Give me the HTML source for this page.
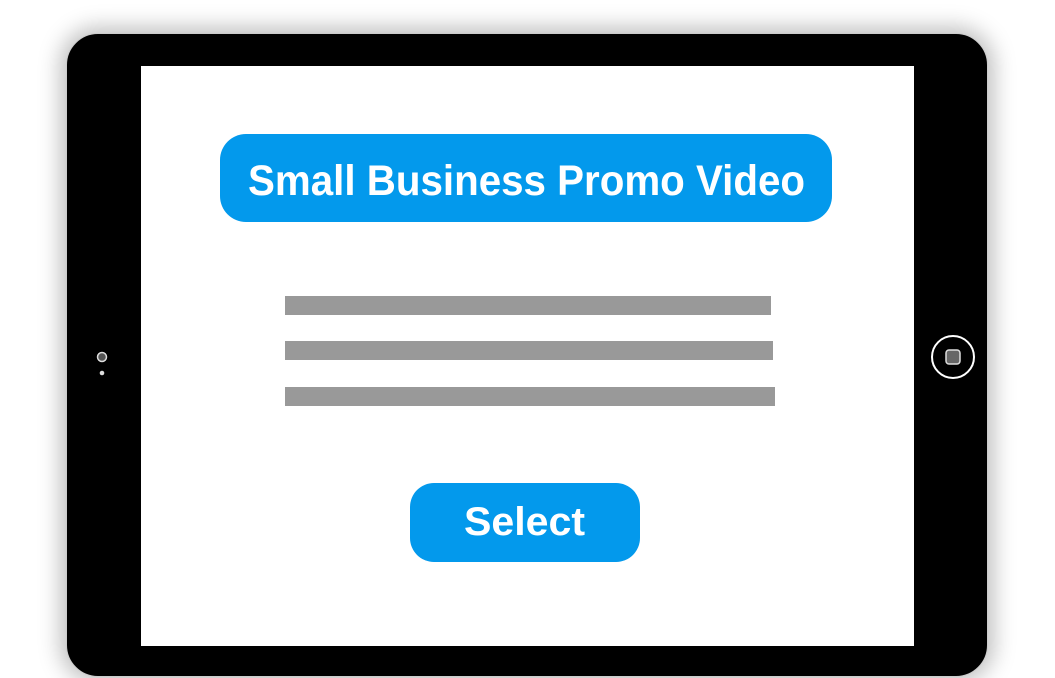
<!DOCTYPE html>
<html><head><style>
html,body{margin:0;padding:0;background:#fff;width:1055px;height:678px;overflow:hidden;position:relative;font-family:"Liberation Sans",sans-serif}
.tab{position:absolute;left:66px;top:33px;width:922px;height:644px;background:#000;border-radius:32px;border:1.5px solid #ccc;box-sizing:border-box;box-shadow:0 0 22px 6px rgba(0,0,0,0.25)}
.scr{position:absolute;left:141px;top:66px;width:773px;height:580px;background:#fff}
.bar{position:absolute;background:#999;height:19px}
</style></head><body>
<div class="tab"></div>
<div class="scr"></div>
<svg width="1055" height="678" style="position:absolute;left:0;top:0">
<circle cx="102" cy="357" r="4.5" fill="#555" stroke="#ddd" stroke-width="1.5"/>
<circle cx="102" cy="373" r="2.3" fill="#ddd"/>
<circle cx="953" cy="357" r="21" fill="none" stroke="#fff" stroke-width="2"/>
<rect x="946" y="350" width="14" height="14" rx="3" fill="#666" stroke="#ddd" stroke-width="1.5"/>
<rect x="220" y="134" width="612" height="88" rx="26" fill="#0399ec"/>
<text x="248" y="195" font-family="Liberation Sans" font-weight="bold" font-size="43" fill="#fff" textLength="557" lengthAdjust="spacingAndGlyphs">Small Business Promo Video</text>
<rect x="410" y="483" width="230" height="79" rx="24" fill="#0399ec"/>
<text x="464" y="535" font-family="Liberation Sans" font-weight="bold" font-size="40" fill="#fff" textLength="121" lengthAdjust="spacingAndGlyphs">Select</text>
</svg>
<div class="bar" style="left:285px;top:296px;width:486px"></div>
<div class="bar" style="left:285px;top:341px;width:488px"></div>
<div class="bar" style="left:285px;top:387px;width:490px"></div>
</body></html>
